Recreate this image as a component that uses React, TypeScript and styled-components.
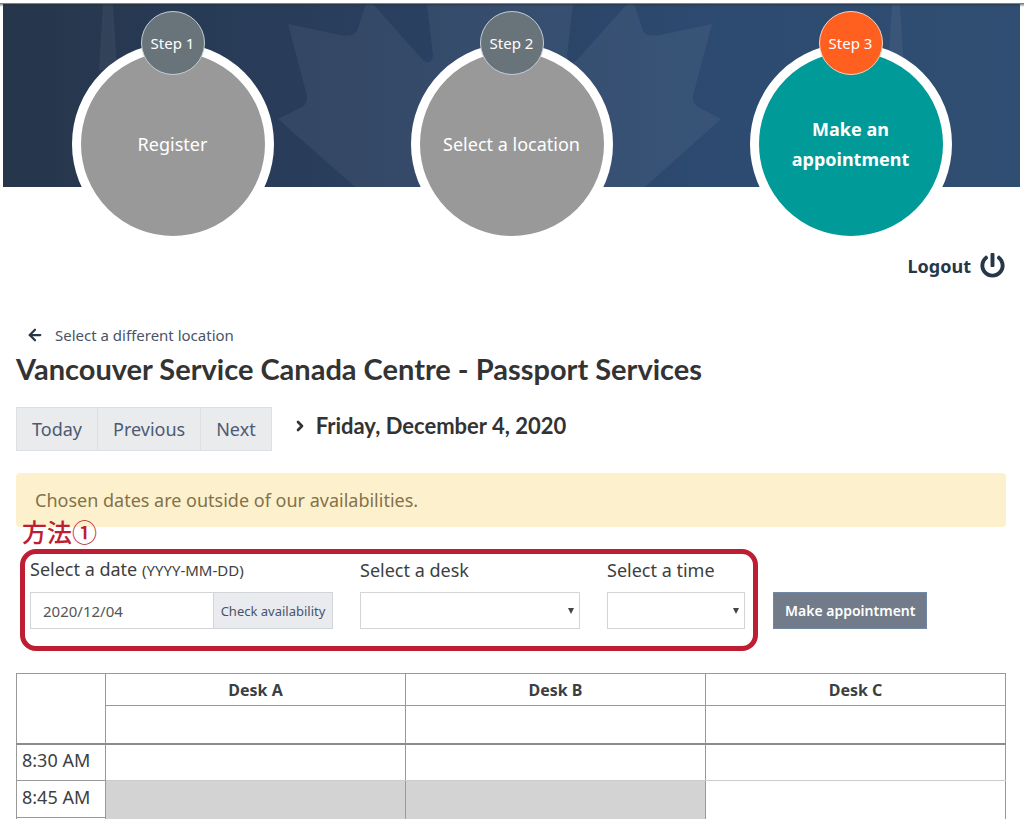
import React from "react";
import styled, { createGlobalStyle, css } from "styled-components";
import { FaPowerOff } from "react-icons/fa";
import { ArrowLeft, ChevronRight } from "lucide-react";

const GlobalStyle = createGlobalStyle`
  *, *::before, *::after { box-sizing: border-box; }
  body {
    margin: 0;
    background: #fff;
    color: #3c3f41;
    font-family: "Noto Sans", "Noto Sans CJK JP", sans-serif;
    font-size: 18px;
    line-height: 24px;
  }
  button, input, select { font: inherit; border-radius: 0; }
`;

const Page = styled.div`
  height: 100vh;
  overflow-y: auto;
  scrollbar-width: none;
  padding: 4px 4px 0 3px;
`;

const Header = styled.header`
  position: relative;
  background: linear-gradient(90deg, #26364b 0%, #2a4061 40%, #2d4a70 70%, #304e72 100%) no-repeat;
  background-size: 100% 183px;
  padding-top: 7px;
`;

const Backdrop = styled.svg`
  position: absolute;
  top: 0;
  left: 0;
  width: 100%;
  height: 183px;
`;

const TopShadow = styled.div`
  position: absolute;
  top: -1px;
  left: -3px;
  right: -4px;
  height: 4px;
  background: linear-gradient(rgba(40, 50, 50, 0.7), rgba(20, 30, 40, 0));
`;

const Steps = styled.ol`
  position: relative;
  display: grid;
  grid-template-columns: repeat(3, 1fr);
  justify-items: center;
  margin: 0;
  padding: 0;
  list-style: none;
`;

const Step = styled.li`
  display: flex;
  flex-direction: column;
  align-items: center;
`;

const StepBadge = styled.span<{ $active?: boolean }>`
  z-index: 1;
  display: grid;
  place-items: center;
  width: 64px;
  height: 64px;
  margin-bottom: -32px;
  border: 1px solid ${(p) => (p.$active ? "#f6d3bd" : "#c3cdd6")};
  border-radius: 50%;
  background: ${(p) => (p.$active ? "#ff5f1f" : "#68747a")};
  color: #fff;
  font-size: 15px;
`;

const StepCircle = styled.span<{ $active?: boolean }>`
  display: grid;
  place-items: center;
  width: 202px;
  height: 202px;
  padding: 0 20px;
  border: 9px solid #fff;
  border-radius: 50%;
  background: ${(p) => (p.$active ? "#009a98" : "#999")};
  color: #fff;
  font-weight: ${(p) => (p.$active ? 700 : 400)};
  line-height: 30px;
  text-align: center;
`;

const Content = styled.main`
  padding: 0 14px 0 13px;
`;

const LogoutBar = styled.div`
  display: flex;
  justify-content: flex-end;
  padding: 8px 1px 0 0;
`;

const LogoutLink = styled.a`
  display: flex;
  align-items: center;
  gap: 9px;
  color: #26374a;
  font-weight: 700;
  text-decoration: none;
`;

const BackLink = styled.a`
  display: inline-flex;
  align-items: center;
  gap: 11px;
  margin: 45px 0 0 10px;
  color: #4a5466;
  font-size: 15px;
  text-decoration: none;
  svg { color: #26374a; }
`;

const Title = styled.h1`
  margin: 2px 0 0;
  color: #333;
  font-family: Lato, sans-serif;
  font-size: 29px;
  font-weight: 700;
  line-height: 36px;
`;

const DateNav = styled.div`
  display: flex;
  align-items: center;
  gap: 20px;
  margin-top: 20px;
`;

const ButtonGroup = styled.div`
  display: flex;
`;

const NavButton = styled.button`
  height: 44px;
  padding: 0 15px;
  border: 1px solid #dcdfe3;
  background: #eaebed;
  color: #4c5a74;
  & + & { border-left: 0; }
`;

const CurrentDate = styled.h2`
  display: flex;
  align-items: center;
  gap: 8px;
  margin: 0 0 6px;
  color: #333;
  font-family: Lato, sans-serif;
  font-size: 22px;
  font-weight: 700;
`;

const Alert = styled.div`
  margin-top: 22px;
  padding: 15px 19px;
  border-radius: 4px;
  background: #fdf1cd;
  color: #83714a;
`;

const FormRow = styled.form`
  display: flex;
  align-items: center;
  gap: 15px;
  margin: 22px 0 0 4px;
`;

const Highlight = styled.fieldset`
  position: relative;
  display: grid;
  grid-template-columns: 303fr 220fr 138fr;
  align-items: end;
  gap: 27px;
  flex: 0 1 738px;
  min-width: 0;
  height: 102px;
  margin: 0;
  padding: 0 8px 17px 5px;
  border: 5px solid #be1e34;
  border-radius: 16px;
`;

const Callout = styled.span`
  position: absolute;
  top: -39px;
  left: -3px;
  color: #be1e34;
  font-family: "Noto Sans CJK JP", sans-serif;
  font-size: 25px;
  font-weight: 500;
  line-height: 32px;
`;

const Field = styled.div`
  display: flex;
  flex-direction: column;
  gap: 10px;
  min-width: 0;
`;

const Hint = styled.span`
  font-size: 15px;
`;

const InputGroup = styled.div`
  display: flex;
`;

const control = css`
  height: 37px;
  border: 1px solid #d2d5d8;
  background: #fff;
`;

const DateInput = styled.input`
  ${control}
  flex: 1;
  min-width: 0;
  padding: 0 12px;
  border-right: 0;
  color: #555;
  font-size: 15px;
`;

const CheckButton = styled.button`
  ${control}
  flex: none;
  width: 120px;
  padding: 0;
  background: #e9ebee;
  color: #46536e;
  font-size: 13px;
`;

const SelectWrap = styled.div`
  position: relative;
  &::after {
    content: "";
    position: absolute;
    top: 16px;
    right: 6px;
    border: solid transparent;
    border-width: 6px 3px 0;
    border-top-color: #444;
    pointer-events: none;
  }
`;

const Select = styled.select`
  ${control}
  display: block;
  width: 100%;
  appearance: none;
`;

const SubmitButton = styled.button`
  height: 37px;
  margin-top: 21px;
  padding: 0 11px;
  border: 1px solid #7087a8;
  background: #717b89;
  color: #fff;
  font-size: 14px;
  font-weight: 600;
`;

const Schedule = styled.table`
  width: 100%;
  margin-top: 22px;
  border-collapse: collapse;
  table-layout: fixed;
  th, td { padding: 0; border: 1px solid #999; }
  thead { border-bottom: 2px solid #8c8c8c; }
`;

const TimeHead = styled.td`
  width: 89px;
`;

const DeskHead = styled.th`
  height: 32px;
  font-size: 16px;
  font-weight: 700;
`;

const AllDay = styled.td`
  height: 38px;
`;

const Time = styled.th`
  height: 37px;
  font-weight: 400;
  font-size: 18px;
  text-align: left;
  && { padding: 0 0 4px 5px; }
`;

const Slot = styled.td<{ $busy?: boolean }>`
  background: ${(p) => (p.$busy ? "#d3d3d3" : "transparent")};
  && { border-bottom-color: #ccc; }
`;

const steps = ["Register", "Select a location", "Make an appointment"];
const desks = ["Desk A", "Desk B", "Desk C"];

export default function App() {
  return (
    <Page>
      <GlobalStyle />
      <Header>
        <Backdrop viewBox="3 4 1017 183" preserveAspectRatio="none" aria-hidden="true">
          <g fill="#fff" fillOpacity="0.055">
            <path d="M288 24L340 35Q354 37 357 31L366 4H373L423 60Q431 66 433 56L427 4H573L567 56Q569 66 577 60L627 4H634L643 31Q646 37 660 35L712 24L693 96Q692 103 698 107L721 119L645 187H355L278 119L302 107Q308 103 307 96Z" />
            <path d="M103 4H113L117 70H99ZM892 4H900L904 70H888Z" />
          </g>
        </Backdrop>
        <TopShadow />
        <Steps>
          {steps.map((name, i) => (
            <Step key={name}>
              <StepBadge $active={i === 2}>Step {i + 1}</StepBadge>
              <StepCircle $active={i === 2}>{name}</StepCircle>
            </Step>
          ))}
        </Steps>
      </Header>
      <Content>
        <LogoutBar>
          <LogoutLink href="#logout">
            Logout <FaPowerOff size={25} />
          </LogoutLink>
        </LogoutBar>
        <BackLink href="#locations">
          <ArrowLeft size={18} strokeWidth={3} />
          Select a different location
        </BackLink>
        <Title>Vancouver Service Canada Centre - Passport Services</Title>
        <DateNav>
          <ButtonGroup>
            <NavButton type="button">Today</NavButton>
            <NavButton type="button">Previous</NavButton>
            <NavButton type="button">Next</NavButton>
          </ButtonGroup>
          <CurrentDate>
            <ChevronRight size={16} strokeWidth={4} />
            Friday, December 4, 2020
          </CurrentDate>
        </DateNav>
        <Alert role="alert">Chosen dates are outside of our availabilities.</Alert>
        <FormRow onSubmit={(e) => e.preventDefault()}>
          <Highlight>
            <Callout>方法①</Callout>
            <Field>
              <label htmlFor="date">
                Select a date <Hint>(YYYY-MM-DD)</Hint>
              </label>
              <InputGroup>
                <DateInput id="date" type="text" defaultValue="2020/12/04" />
                <CheckButton type="button">Check availability</CheckButton>
              </InputGroup>
            </Field>
            <Field>
              <label htmlFor="desk">Select a desk</label>
              <SelectWrap>
                <Select id="desk" />
              </SelectWrap>
            </Field>
            <Field>
              <label htmlFor="time">Select a time</label>
              <SelectWrap>
                <Select id="time" />
              </SelectWrap>
            </Field>
          </Highlight>
          <SubmitButton type="submit">Make appointment</SubmitButton>
        </FormRow>
        <Schedule>
          <thead>
            <tr>
              <TimeHead rowSpan={2} />
              {desks.map((d) => (
                <DeskHead key={d} scope="col">{d}</DeskHead>
              ))}
            </tr>
            <tr>
              {desks.map((d) => (
                <AllDay key={d} />
              ))}
            </tr>
          </thead>
          <tbody>
            <tr>
              <Time scope="row">8:30 AM</Time>
              <Slot />
              <Slot />
              <Slot />
            </tr>
            <tr>
              <Time scope="row">8:45 AM</Time>
              <Slot $busy rowSpan={2} />
              <Slot $busy rowSpan={2} />
              <Slot rowSpan={2} />
            </tr>
            <tr>
              <Time as="td" />
            </tr>
          </tbody>
        </Schedule>
      </Content>
    </Page>
  );
}
